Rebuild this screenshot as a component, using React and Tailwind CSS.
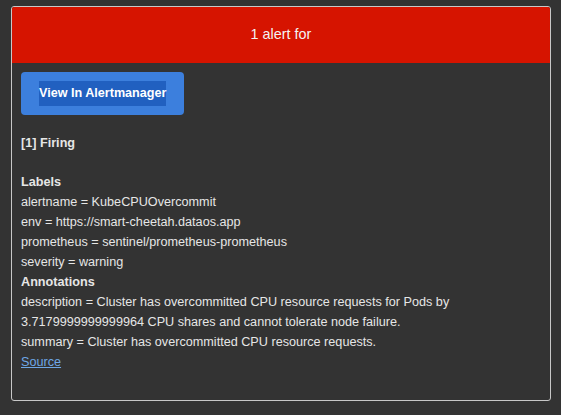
export default function App() {
  return (
    <div className="w-[561px] h-[415px] bg-[#333333] pt-[6px] px-[11px]" style={{ fontFamily: '"Liberation Sans", Arial, sans-serif' }}>
      <div className="w-[540px] h-[395px] border border-[#c8c8c8] rounded-[3px] overflow-hidden">
        <div className="h-[56px] bg-[#d61400] flex items-center justify-center text-[#f3f3f3] text-[14.4px]">
          1 alert for
        </div>
        <div className="pl-[9px] pr-[8px] pt-[9px] text-[12.65px] leading-[20px] text-[#e6e6e6]">
          <div className="inline-flex bg-[#3c7fdd] rounded-[4px] px-[18px] py-[9px]">
            <span className="bg-[#2160c0] text-white font-bold text-[12.6px] leading-[25px] h-[25px]">View In Alertmanager</span>
          </div>
          <div className="mt-[18px] font-bold">[1] Firing</div>
          <div className="h-[19px]"></div>
          <div className="font-bold">Labels</div>
          <div>alertname = KubeCPUOvercommit</div>
          <div>env = https://smart-cheetah.dataos.app</div>
          <div>prometheus = sentinel/prometheus-prometheus</div>
          <div>severity = warning</div>
          <div className="font-bold">Annotations</div>
          <div>description = Cluster has overcommitted CPU resource requests for Pods by</div>
          <div>3.7179999999999964 CPU shares and cannot tolerate node failure.</div>
          <div>summary = Cluster has overcommitted CPU resource requests.</div>
          <div><a className="text-[#6ea7e6] underline" href="#">Source</a></div>
        </div>
      </div>
    </div>
  );
}
